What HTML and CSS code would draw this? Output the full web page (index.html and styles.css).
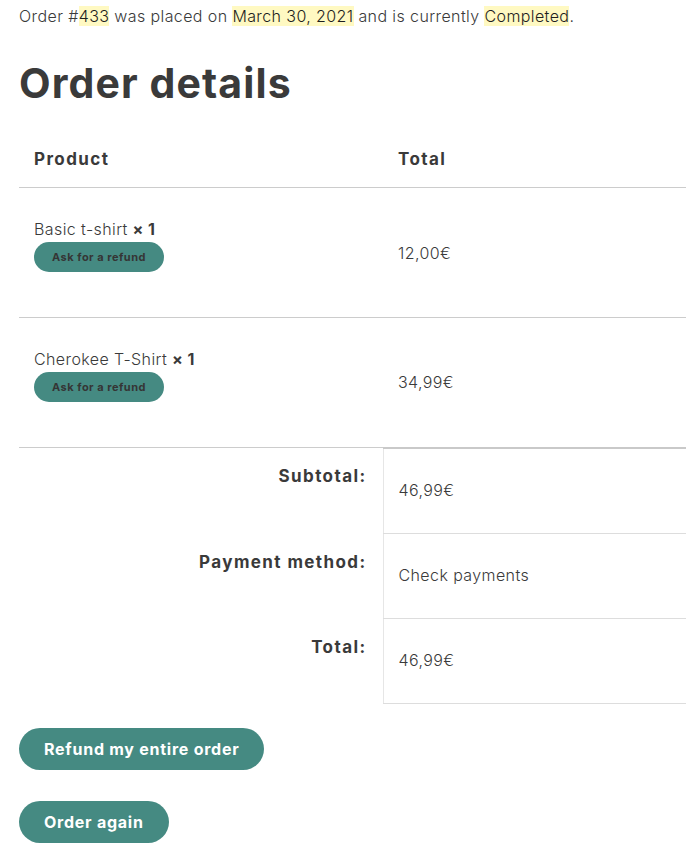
FILE: index.html
```html
<!DOCTYPE html>
<html lang="en">
<head>
<meta charset="utf-8">
<title>Order details</title>
<link rel="stylesheet" href="styles.css">
</head>
<body>
<main class="page">
  <p class="order-info">Order #<mark>433</mark> was placed on <mark>March 30, 2021</mark> and is currently <mark>Completed</mark>.</p>
  <h2 class="title">Order details</h2>
  <table class="order-table">
    <thead>
      <tr>
        <th class="col-product">Product</th>
        <th class="col-total">Total</th>
      </tr>
    </thead>
    <tbody>
      <tr class="item">
        <td class="product">
          <div class="product-name">Basic t-shirt <strong>× 1</strong></div>
          <a class="refund-btn" href="#">Ask for a refund</a>
        </td>
        <td class="total">12,00€</td>
      </tr>
      <tr class="item">
        <td class="product">
          <div class="product-name">Cherokee T-Shirt <strong>× 1</strong></div>
          <a class="refund-btn" href="#">Ask for a refund</a>
        </td>
        <td class="total">34,99€</td>
      </tr>
    </tbody>
    <tfoot>
      <tr class="sum first">
        <th>Subtotal:</th>
        <td>46,99€</td>
      </tr>
      <tr class="sum">
        <th>Payment method:</th>
        <td>Check payments</td>
      </tr>
      <tr class="sum">
        <th>Total:</th>
        <td>46,99€</td>
      </tr>
    </tfoot>
  </table>
  <div class="actions">
    <a class="btn" href="#">Refund my entire order</a>
    <a class="btn" href="#">Order again</a>
  </div>
</main>
</body>
</html>
```
FILE: styles.css
```css
html, body {
  margin: 0;
  padding: 0;
  background: #ffffff;
}
body {
  font-family: "Inter", "Open Sans", sans-serif;
  font-weight: 300;
  font-size: 16px;
  line-height: 24px;
  color: #3a3a3a;
  letter-spacing: 0.4px;
}
.page {
  padding: 0 7px 0 19px;
}
.order-info {
  margin: 4px 0 0;
}
.order-info mark {
  background: #fff9c2;
  color: #1e1e1e;
  padding: 0;
}
.title {
  margin: 31px 0 21px;
  font-size: 41px;
  line-height: 49px;
  font-weight: 700;
  letter-spacing: 1.1px;
  color: #3a3a3a;
}
.order-table {
  width: 667px;
  border-collapse: collapse;
  border-spacing: 0;
}
.order-table th {
  font-weight: 700;
  font-size: 17px;
  letter-spacing: 1.4px;
}
thead th {
  text-align: left;
  padding: 18px 15px 16px;
  border-bottom: 1px solid #cccccc;
}
.col-product {
  width: 334px;
}
.item {
  height: 130px;
}
.item td {
  border-bottom: 1px solid #cccccc;
  vertical-align: middle;
}
.product {
  padding: 0 15px 16px;
}
.total {
  padding: 0 15px;
}
.product-name strong {
  font-weight: 700;
}
.refund-btn {
  display: inline-block;
  margin-top: 1px;
  height: 30px;
  line-height: 30px;
  padding: 0 18px;
  border-radius: 15px;
  background: #458a82;
  color: #353535;
  font-size: 11px;
  font-weight: 700;
  letter-spacing: 0.5px;
  text-decoration: none;
}
.sum {
  height: 85px;
}
.sum.first {
  height: 86px;
}
.sum th {
  text-align: right;
  vertical-align: top;
  padding: 16px 16px 0 15px;
}
.sum td {
  vertical-align: top;
  padding: 29px 15px 0;
  border-left: 1px solid #e6e6e6;
  border-bottom: 1px solid #dddddd;
}
.sum.first td {
  border-top: 2px solid #c9c9c9;
}
.actions {
  display: flex;
  flex-direction: column;
  align-items: flex-start;
  gap: 31px;
  margin-top: 24px;
}
.btn {
  display: inline-block;
  height: 42px;
  line-height: 42px;
  padding: 0 25px;
  border-radius: 21px;
  background: #458a82;
  color: #ffffff;
  font-weight: 700;
  font-size: 16px;
  letter-spacing: 0.75px;
  text-decoration: none;
}
```
